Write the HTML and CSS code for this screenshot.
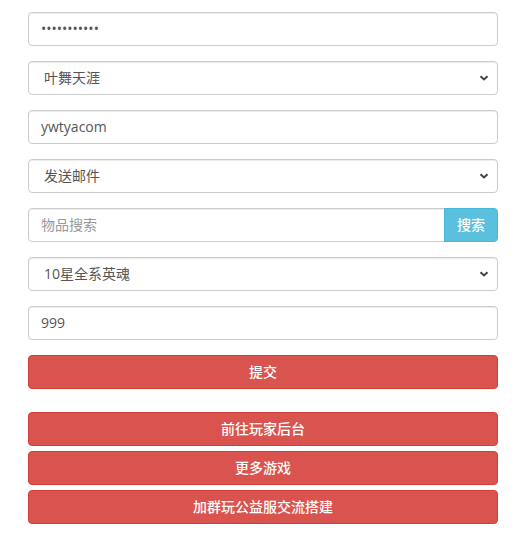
FILE: index.html
```html
<!DOCTYPE html>
<html lang="zh-CN">
<head>
  <meta charset="UTF-8" />
  <meta name="viewport" content="width=device-width, initial-scale=1.0"/>
  <title>玩家后台</title>
  <link rel="stylesheet" href="styles.css">
</head>
<body>
  <div class="container">
    <form class="mail-form" onsubmit="return false;">
      <div class="form-group">
        <input class="form-control" type="password" value="12345678901">
      </div>
      <div class="form-group">
        <select class="form-control form-select">
          <option>叶舞天涯</option>
        </select>
      </div>
      <div class="form-group">
        <input class="form-control" type="text" value="ywtyacom">
      </div>
      <div class="form-group">
        <select class="form-control form-select">
          <option>发送邮件</option>
        </select>
      </div>
      <div class="form-group input-group">
        <input class="form-control" type="text" placeholder="物品搜索">
        <button class="btn btn-info" type="button">搜索</button>
      </div>
      <div class="form-group">
        <select class="form-control form-select">
          <option>10星全系英魂</option>
        </select>
      </div>
      <div class="form-group">
        <input class="form-control" type="text" value="999">
      </div>
      <button class="btn btn-danger btn-block" type="submit">提交</button>
    </form>
    <div class="links">
      <a class="btn btn-danger btn-block" href="#">前往玩家后台</a>
      <a class="btn btn-danger btn-block" href="#">更多游戏</a>
      <a class="btn btn-danger btn-block" href="#">加群玩公益服交流搭建</a>
    </div>
  </div>
</body>
</html>
```

FILE: styles.css
```css
* {
  box-sizing: border-box;
}
body {
  margin: 0;
  background: #fff;
  color: #333;
  font-family: 'Open Sans', 'Noto Sans CJK SC', sans-serif;
  font-size: 14px;
}
.container {
  padding: 12px 30px 0 28px;
}
.form-group {
  margin-bottom: 15px;
}
.form-control {
  display: block;
  width: 100%;
  height: 34px;
  padding: 6px 12px 7px;
  font-family: inherit;
  font-size: 14px;
  color: #555;
  background: #fff;
  border: 1px solid #ccc;
  border-radius: 4px;
  box-shadow: inset 0 1px 1px rgba(0, 0, 0, .075);
  outline: none;
}
.form-control::placeholder {
  color: #999;
}
.form-select {
  appearance: none;
  -webkit-appearance: none;
  padding-left: 15px;
  background: #fff url("data:image/svg+xml,%3Csvg xmlns='http://www.w3.org/2000/svg' width='10' height='6' viewBox='0 0 10 6'%3E%3Cpath d='M1.5 1.2l3.5 3.3 3.5-3.3' fill='none' stroke='%23444' stroke-width='2'/%3E%3C/svg%3E") no-repeat right 8px center;
}
.input-group {
  display: flex;
}
.input-group .form-control {
  flex: 1;
  border-radius: 4px 0 0 4px;
}
.input-group .btn {
  width: 54px;
  border-radius: 0 4px 4px 0;
  margin-left: -1px;
}
.btn {
  display: inline-block;
  height: 34px;
  padding: 6px 12px;
  font-family: inherit;
  font-size: 14px;
  font-weight: 500;
  line-height: 20px;
  text-align: center;
  text-decoration: none;
  color: #fff;
  border: 1px solid transparent;
  border-radius: 4px;
  cursor: pointer;
}
.btn-info {
  background: #5bc0de;
  border-color: #46b8da;
}
.btn-danger {
  background: #d9534f;
  border-color: #d43f3a;
}
.btn-block {
  display: block;
  width: 100%;
}
.links {
  margin-top: 23px;
}
.links .btn {
  margin-bottom: 5px;
}
```
